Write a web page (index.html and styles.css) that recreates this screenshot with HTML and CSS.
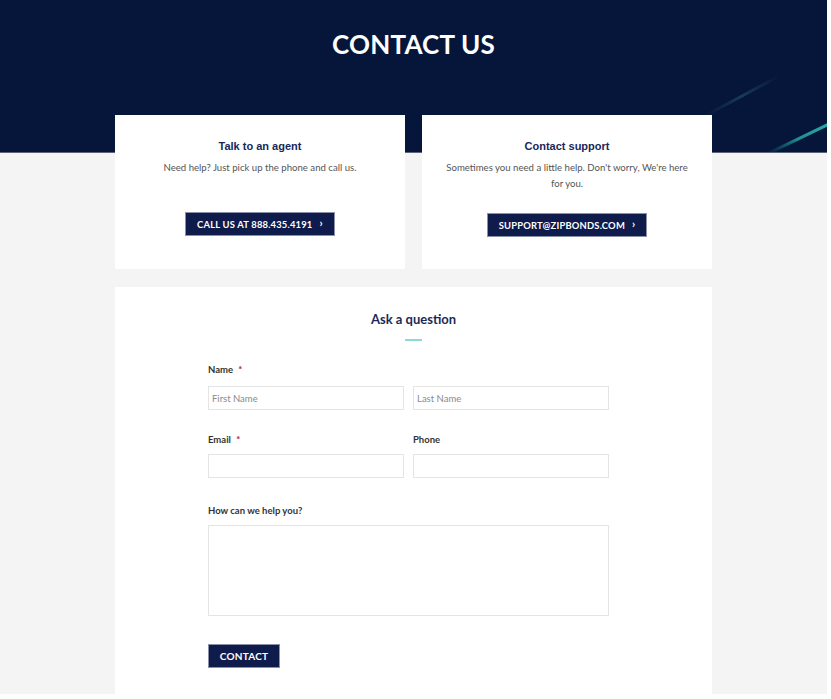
FILE: index.html
```html
<!DOCTYPE html>
<html lang="en">
<head>
<meta charset="utf-8">
<title>Contact Us</title>
<link rel="stylesheet" href="styles.css">
</head>
<body>
<div class="page">
  <header class="hero">
    <h1 class="hero-title">CONTACT US</h1>
    <svg class="hero-streaks" width="160" height="100" viewBox="0 0 160 100" aria-hidden="true">
      <defs>
        <linearGradient id="g1" x1="0" y1="1" x2="1" y2="0">
          <stop offset="0" stop-color="#1d3a5a" stop-opacity="0"/>
          <stop offset="0.5" stop-color="#1d3e5e" stop-opacity="0.9"/>
          <stop offset="1" stop-color="#1d3a5a" stop-opacity="0"/>
        </linearGradient>
        <linearGradient id="g2" x1="0" y1="1" x2="1" y2="0">
          <stop offset="0" stop-color="#1a6e78" stop-opacity="0"/>
          <stop offset="0.5" stop-color="#1f8f92" stop-opacity="1"/>
          <stop offset="1" stop-color="#29a9a6" stop-opacity="1"/>
        </linearGradient>
      </defs>
      <line x1="38" y1="64" x2="112" y2="24" stroke="url(#g1)" stroke-width="3"/>
      <line x1="100" y1="102" x2="162" y2="72" stroke="url(#g2)" stroke-width="3"/>
    </svg>
  </header>

  <main class="content">
    <section class="cards">
      <div class="card">
        <h2 class="card-title">Talk to an agent</h2>
        <p class="card-text">Need help? Just pick up the phone and call us.</p>
        <a class="btn btn-card" href="#">CALL US AT 888.435.4191 <span class="chev">&rsaquo;</span></a>
      </div>
      <div class="card">
        <h2 class="card-title">Contact support</h2>
        <p class="card-text">Sometimes you need a little help. Don't worry, We're here for you.</p>
        <a class="btn btn-card" href="#">SUPPORT@ZIPBONDS.COM <span class="chev">&rsaquo;</span></a>
      </div>
    </section>

    <section class="form-card">
      <h2 class="form-title">Ask a question</h2>
      <div class="form-rule"></div>
      <form class="form">
        <div class="field">
          <label class="label">Name <span class="req">*</span></label>
          <div class="row">
            <input class="input" type="text" placeholder="First Name">
            <input class="input" type="text" placeholder="Last Name">
          </div>
        </div>
        <div class="row row-fields">
          <div class="field">
            <label class="label">Email <span class="req">*</span></label>
            <input class="input" type="text">
          </div>
          <div class="field">
            <label class="label">Phone</label>
            <input class="input" type="text">
          </div>
        </div>
        <div class="field field-msg">
          <label class="label">How can we help you?</label>
          <textarea class="textarea"></textarea>
        </div>
        <button class="btn btn-submit" type="button">CONTACT</button>
      </form>
    </section>
  </main>
</div>
</body>
</html>
```

FILE: styles.css
```css
html, body {
  margin: 0;
  padding: 0;
  background: #ffffff;
}
body {
  font-family: Lato, "Liberation Sans", sans-serif;
  width: 831px;
  height: 699px;
  overflow: hidden;
}
.page {
  width: 827px;
  height: 694px;
  background: #f4f4f4;
  position: relative;
  overflow: hidden;
}
.hero {
  height: 152px;
  background: #05163a;
  border-bottom: 1px solid #5c6478;
  position: relative;
  overflow: hidden;
}
.hero-title {
  margin: 0;
  padding-top: 29px;
  text-align: center;
  color: #ffffff;
  font-family: Lato, sans-serif;
  font-weight: 700;
  font-size: 26px;
  line-height: 30px;
  letter-spacing: 0.2px;
}
.hero-streaks {
  position: absolute;
  right: 0;
  bottom: 0;
}
.content {
  position: relative;
  margin-top: -38px;
  width: 597px;
  margin-left: auto;
  margin-right: auto;
}
.cards {
  display: flex;
  gap: 17px;
}
.card {
  width: 290px;
  height: 154px;
  background: #ffffff;
  display: flex;
  flex-direction: column;
  align-items: center;
  box-sizing: border-box;
  padding: 24px 20px 0;
}
.card-title {
  margin: 0;
  font-family: "Liberation Sans", Arial, sans-serif;
  font-weight: 700;
  font-size: 11px;
  line-height: 14px;
  color: #18285a;
}
.card-text {
  margin: 7px 0 0;
  font-size: 9.6px;
  line-height: 16px;
  color: #555555;
  text-align: center;
  height: 32px;
}
.btn {
  display: inline-flex;
  align-items: center;
  justify-content: center;
  background: #0f1b4b;
  color: #ffffff;
  font-family: Lato, sans-serif;
  font-weight: 700;
  font-size: 9.4px;
  letter-spacing: 0.2px;
  text-decoration: none;
  border: 1px solid #8a90a8;
  box-sizing: border-box;
  height: 24px;
}
.btn-card {
  margin-top: 21px;
  padding: 0 11px 0 11px;
}
.card:first-child .btn-card {
  margin-top: 20px;
}
.chev {
  margin-left: 7px;
  font-size: 11px;
  line-height: 10px;
  position: relative;
  top: -1px;
}
.form-card {
  margin-top: 18px;
  background: #ffffff;
  height: 407px;
  box-sizing: border-box;
  padding-top: 25px;
}
.form-title {
  margin: 0;
  text-align: center;
  font-family: Lato, sans-serif;
  font-weight: 700;
  font-size: 13px;
  line-height: 15px;
  color: #1a2a58;
}
.form-rule {
  width: 17px;
  height: 2px;
  background: #8fd8d4;
  margin: 12px auto 0;
}
.form {
  width: 401px;
  margin-left: 93px;
  margin-top: 23px;
}
.field {
  display: flex;
  flex-direction: column;
}
.label {
  font-size: 9.5px;
  font-weight: 700;
  color: #333333;
  line-height: 12px;
  height: 12px;
  margin-bottom: 10px;
}
.req {
  color: #b0202a;
  margin-left: 3px;
}
.row {
  display: flex;
  gap: 9px;
}
.row > .input, .row > .field {
  flex: 1;
}
.row-fields {
  margin-top: 24px;
}
.row-fields .label {
  margin-bottom: 8px;
}
.input {
  height: 24px;
  box-sizing: border-box;
  border: 1px solid #e4e4e4;
  background: #ffffff;
  font-family: Lato, sans-serif;
  font-size: 9.5px;
  padding: 0 3px;
  margin: 0;
  outline: none;
  min-width: 0;
}
.input::placeholder {
  color: #8a8a8a;
}
.field-msg {
  margin-top: 27px;
}
.field-msg .label {
  margin-bottom: 8px;
}
.textarea {
  height: 91px;
  box-sizing: border-box;
  border: 1px solid #e4e4e4;
  resize: none;
  margin: 0;
  font-family: Lato, sans-serif;
}
.btn-submit {
  margin-top: 28px;
  padding: 0 12px;
  width: 72px;
  font-size: 10px;
  cursor: pointer;
}
```
